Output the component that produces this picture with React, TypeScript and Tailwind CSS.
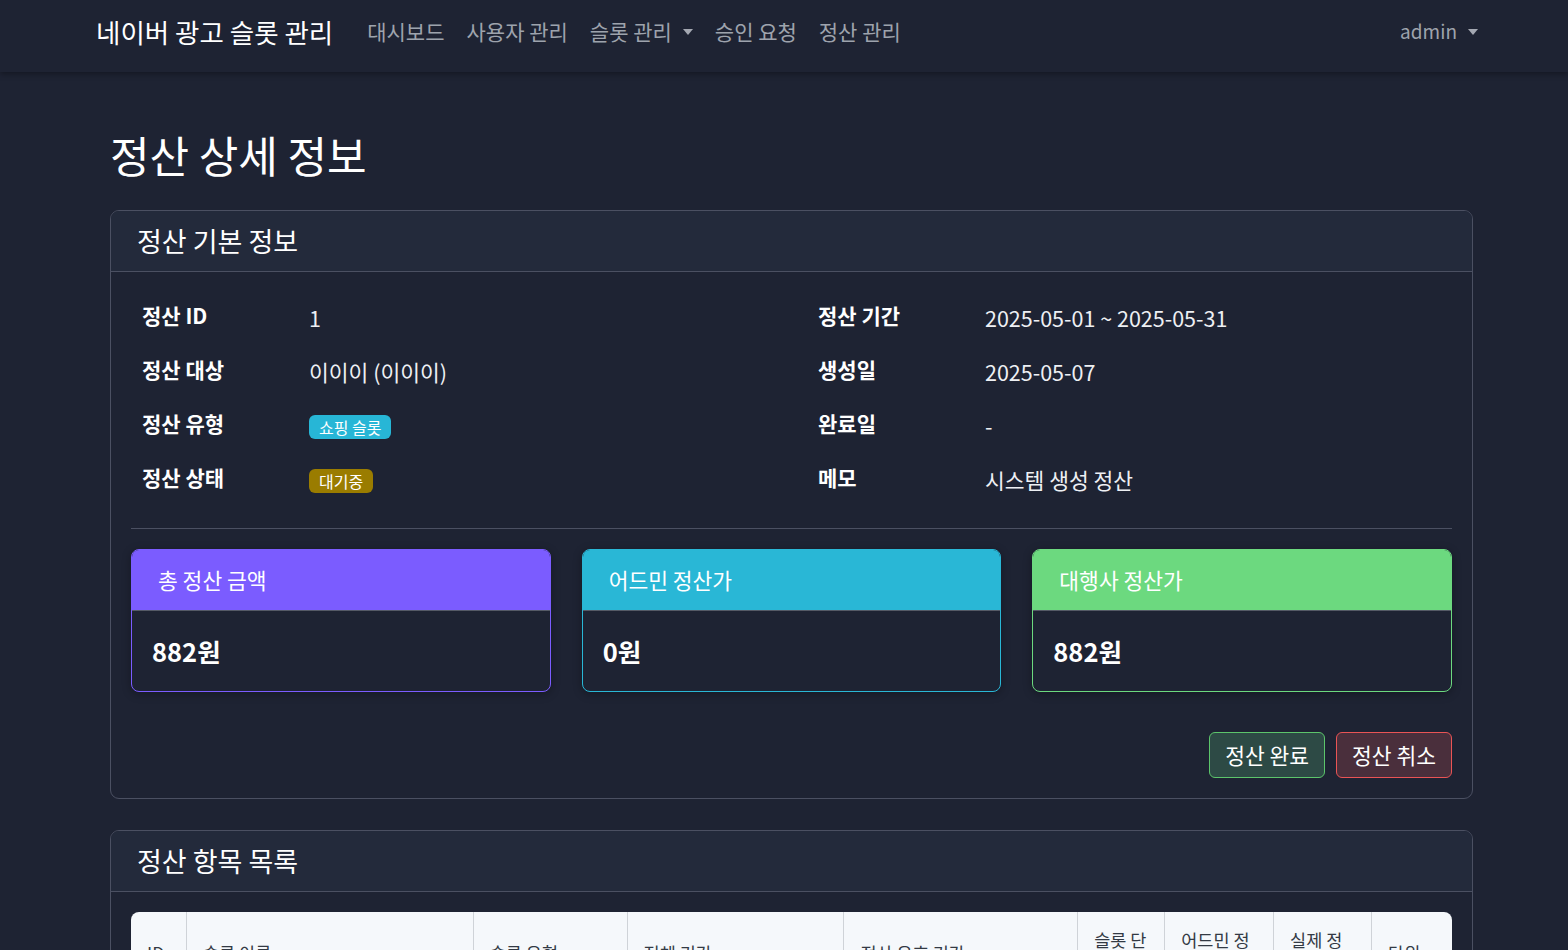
const font = { fontFamily: '"Noto Sans CJK KR", "Noto Sans", sans-serif' };

function Caret() {
  return <span className="inline-block ml-[11px] border-t-[6px] border-x-[5.5px] border-x-transparent border-t-[#a4a8b2] align-middle" />;
}

const infoLeft = [
  { label: "정산 ID", value: "1" },
  { label: "정산 대상", value: "이이이 (이이이)" },
  { label: "정산 유형", badge: { text: "쇼핑 슬롯", cls: "bg-[#27b6d6]" } },
  { label: "정산 상태", badge: { text: "대기중", cls: "bg-[#9a7c00]" } },
];

const infoRight = [
  { label: "정산 기간", value: "2025-05-01 ~ 2025-05-31" },
  { label: "생성일", value: "2025-05-07" },
  { label: "완료일", value: "-" },
  { label: "메모", value: "시스템 생성 정산" },
];

const stats = [
  { title: "총 정산 금액", value: "882원", head: "bg-[#7b5cff]", border: "border-[#7b5cff]" },
  { title: "어드민 정산가", value: "0원", head: "bg-[#29b7d6]", border: "border-[#29b7d6]" },
  { title: "대행사 정산가", value: "882원", head: "bg-[#6cd97f]", border: "border-[#6cd97f]" },
];

const columns = [
  { label: "ID", w: "w-[55px]" },
  { label: "슬롯 이름", w: "w-[287px]" },
  { label: "슬롯 유형", w: "w-[154px]" },
  { label: "전체 기간", w: "w-[217px]" },
  { label: "정산 유효 기간", w: "w-[234px]" },
  { label: "슬롯 단가", w: "w-[87px]" },
  { label: "어드민 정산가", w: "w-[109px]" },
  { label: "실제 정산가", w: "w-[98px]" },
  { label: "단위", w: "w-[81px]" },
];

type Info = { label: string; value?: string; badge?: { text: string; cls: string } };

function InfoRow({ item }: { item: Info }) {
  return (
    <div className="flex items-center h-[54px] pl-[11px]">
      <div className="w-[167px] text-[21px] font-bold text-white -mt-[4px]">{item.label}</div>
      {item.badge ? (
        <span className={`${item.badge.cls} text-white text-[16px] leading-[24px] h-[24px] px-[10px] rounded-[6px] mt-[2px]`}>{item.badge.text}</span>
      ) : (
        <div className="text-[21.5px] text-[#eef0f4]">{item.value}</div>
      )}
    </div>
  );
}

export default function App() {
  return (
    <div style={font} className="min-h-[950px] bg-[#1e2333] text-white">
      <nav className="h-[72px] flex items-center pb-[9px] pl-[96px] pr-[90px] bg-[#1e2333] shadow-[0_2px_6px_rgba(0,0,0,0.35)] relative z-10">
        <div className="text-[26.5px] text-white mr-[23px]">네이버 광고 슬롯 관리</div>
        <div className="flex items-center text-[21px] text-[#9ea3ad]">
          <span className="px-[11px]">대시보드</span>
          <span className="px-[11px]">사용자 관리</span>
          <span className="px-[11px] flex items-center">슬롯 관리<Caret /></span>
          <span className="px-[11px]">승인 요청</span>
          <span className="px-[11px]">정산 관리</span>
        </div>
        <div className="ml-auto flex items-center text-[19px] text-[#9ea3ad]">
          admin<Caret />
        </div>
      </nav>

      <main className="ml-[110px] w-[1363px] pt-[52px]">
        <h1 className="text-[43px] leading-[60px] text-white mb-[26px]">정산 상세 정보</h1>

        <section className="border border-[#4b5062] rounded-[9px] overflow-hidden">
          <div className="h-[61px] bg-[#232a3b] border-b border-[#4b5062] flex items-center px-[26px] text-[27px]">정산 기본 정보</div>
          <div className="p-5">
            <div className="grid grid-cols-[676px_1fr] -mt-[1px]">
              <div>{infoLeft.map((i) => <InfoRow key={i.label} item={i} />)}</div>
              <div>{infoRight.map((i) => <InfoRow key={i.label} item={i} />)}</div>
            </div>
            <div className="border-t border-[#4b5062] mt-[21px] mb-[20px]" />
            <div className="grid grid-cols-3 gap-[31px]">
              {stats.map((s) => (
                <div key={s.title} className={`border ${s.border} rounded-[8px] overflow-hidden shadow-[0_2px_10px_rgba(0,0,0,0.3)]`}>
                  <div className={`${s.head} h-[61px] border-b border-[#555a66] flex items-center px-[26px] text-[21.5px] text-white`}>{s.title}</div>
                  <div className="h-[80px] flex items-center px-[20px] text-[25.5px] font-bold text-white">{s.value}</div>
                </div>
              ))}
            </div>
            <div className="flex justify-end gap-[11px] mt-[40px]">
              <button className="h-[46px] px-[15px] rounded-[6px] border border-[#5cc56b] bg-[#2d4a45] text-[21.5px] text-white">정산 완료</button>
              <button className="h-[46px] px-[15px] rounded-[6px] border border-[#ea5455] bg-[#4a2f3c] text-[21.5px] text-white">정산 취소</button>
            </div>
          </div>
        </section>

        <section className="mt-[31px] border border-[#4b5062] rounded-[9px] overflow-hidden">
          <div className="h-[61px] bg-[#232a3b] border-b border-[#4b5062] flex items-center px-[26px] text-[27px]">정산 항목 목록</div>
          <div className="p-5">
            <div className="bg-[#f5f8fb] rounded-[8px] overflow-hidden">
              <div className="flex text-[17.5px] text-[#333a44]">
                {columns.map((c, i) => (
                  <div key={c.label} className={`${c.w} ${i > 0 ? "border-l border-[#cfd3d8]" : ""} flex items-center px-[16px] pt-[14px] pb-[8px] h-[76px] leading-[26px] break-all`}>
                    {c.label}
                  </div>
                ))}
              </div>
              <div className="h-[60px] border-t border-[#cfd3d8]" />
            </div>
          </div>
        </section>
      </main>
    </div>
  );
}
